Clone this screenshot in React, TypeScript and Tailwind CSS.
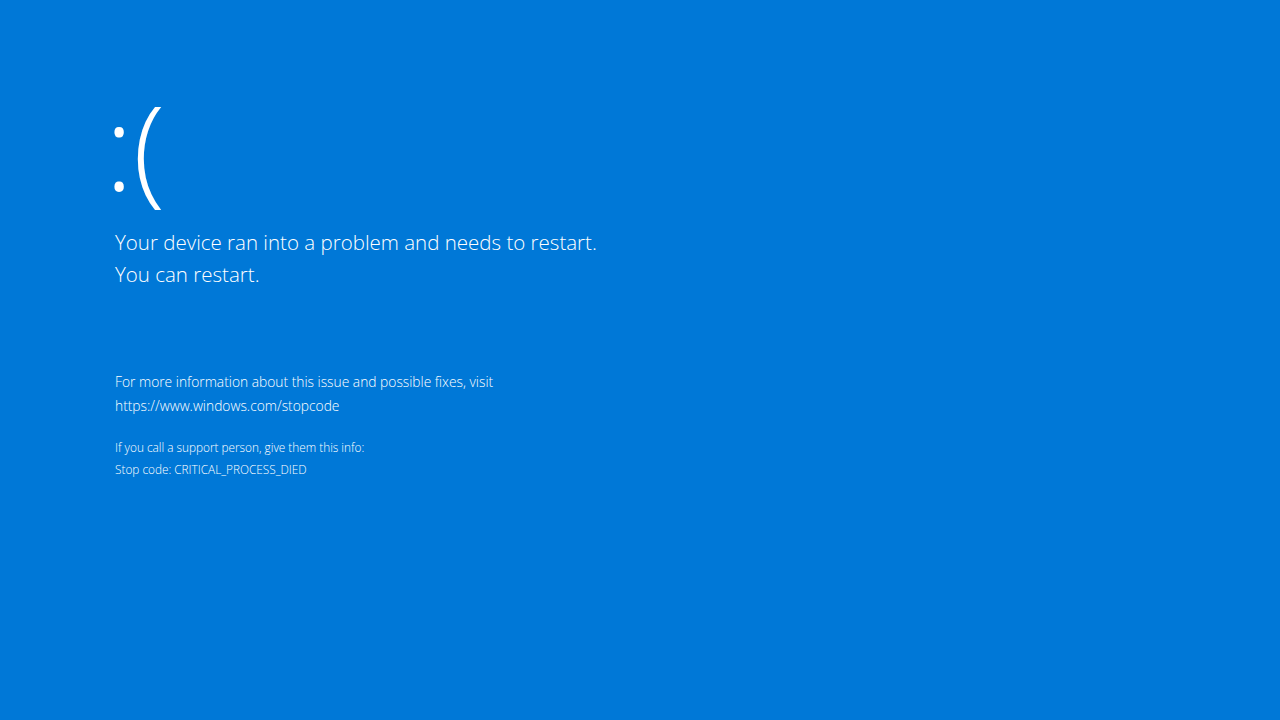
export default function App() {
  return (
    <div
      className="h-[720px] w-[1280px] overflow-hidden bg-[#0078d7] text-white"
      style={{ fontFamily: '"Open Sans", "Noto Sans", sans-serif' }}
    >
      <div className="flex flex-col pl-[115px] pt-[68px]">
        <div className="-ml-[10px] text-[118px] font-light leading-[156px]">:(</div>
        <div className="mt-[2px] text-[20.5px] font-light leading-[32px]">
          <p>Your device ran into a problem and needs to restart.</p>
          <p>You can restart.</p>
        </div>
        <div className="mt-[80px] text-[13.8px] font-light leading-[24px]">
          <p>For more information about this issue and possible fixes, visit</p>
          <p>https://www.windows.com/stopcode</p>
        </div>
        <div className="mt-[18px] text-[11.8px] font-light leading-[22px]">
          <p>If you call a support person, give them this info:</p>
          <p>Stop code: CRITICAL_PROCESS_DIED</p>
        </div>
      </div>
    </div>
  );
}
